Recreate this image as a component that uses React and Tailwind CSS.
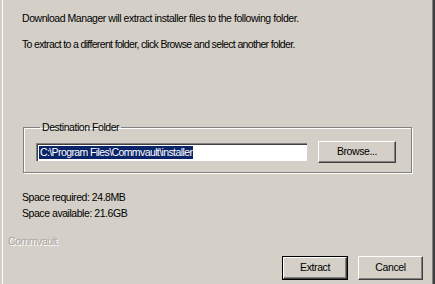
import React from 'react';

const font = { fontFamily: '"Liberation Sans", Arial, sans-serif' };

function Btn({ children, isDefault, className = '' }) {
  // classic 3D push button
  return (
    <div className={`${isDefault ? 'border border-black' : ''} ${className}`}>
      <div className="h-full w-full flex items-center justify-center border border-t-white border-l-white border-b-[#404040] border-r-[#404040] shadow-[inset_-1px_-1px_0_#808080] text-[10.5px] tracking-[-0.4px] text-black bg-[#d4d0c8]">
        {children}
      </div>
    </div>
  );
}

export default function App() {
  return (
    <div style={font} className="w-[435px] h-[284px] bg-[#d4d0c8] flex overflow-hidden text-[10.5px] tracking-[-0.45px] text-black">
      <div className="w-[2px] bg-[#d4d0c8]" />
      <div className="flex-1 flex flex-col border-l border-white">
        <div className="pl-[19px] pt-[11px] leading-[14px]">
          <p>Download Manager will extract installer files to the following folder.</p>
          <p className="mt-[12px] tracking-[-0.65px]">To extract to a different folder, click Browse and select another folder.</p>
        </div>

        {/* Destination folder group */}
        <fieldset className="ml-[20px] mr-[20px] mt-[70px] border border-[#808080] shadow-[inset_1px_1px_0_white,1px_1px_0_white] px-[12px] pt-[7px] pb-[9px]">
          <legend className="ml-[4px] px-[2px] leading-[13px]">Destination Folder</legend>
          <div className="flex items-center">
            <div className="w-[271px] h-[18px] bg-white border-t border-l border-t-[#808080] border-l-[#808080] shadow-[inset_1px_1px_0_#404040] flex items-center pl-[2px]">
              <span className="bg-[#0a246a] text-white leading-[13px] px-[1px] tracking-[-0.6px]">C:\Program Files\Commvault\installer</span>
            </div>
            <Btn className="ml-[11px] w-[78px] h-[22px]">Browse...</Btn>
          </div>
        </fieldset>

        <div className="pl-[19px] mt-[16px] leading-[16px]">
          <p>Space required: 24.8MB</p>
          <p>Space available: 21.6GB</p>
        </div>

        <div className="pl-[5px] mt-[13px] leading-[14px] text-[#aaa69e] [text-shadow:1px_1px_0_white]">Commvault</div>

        <div className="flex justify-end mt-[8px] pr-[9px]">
          <Btn isDefault className="w-[66px] h-[24px]">Extract</Btn>
          <Btn className="ml-[10px] w-[65px] h-[24px]">Cancel</Btn>
        </div>
      </div>
      <div className="w-[1px] bg-[#808080]" />
      <div className="w-[2px] bg-[#404040]" />
    </div>
  );
}
